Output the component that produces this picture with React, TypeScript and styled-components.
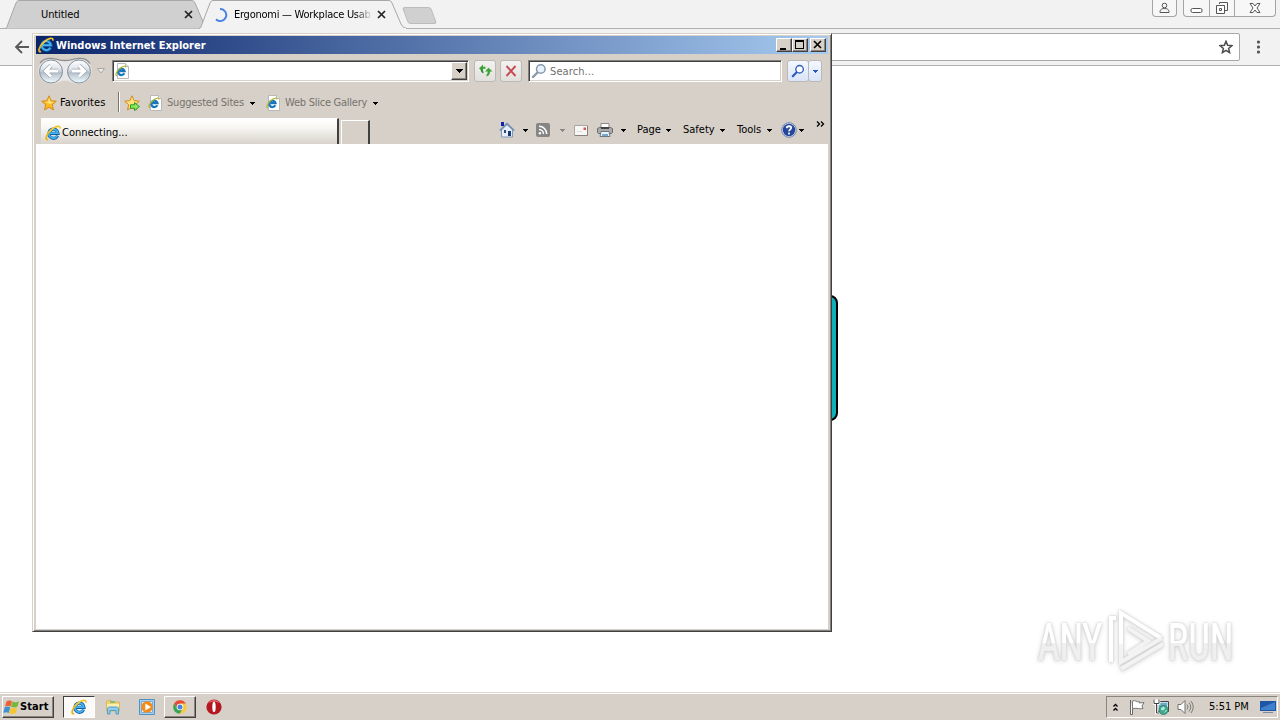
import type { ReactNode } from "react";
import styled, { createGlobalStyle, css } from "styled-components";

const GlobalStyle = createGlobalStyle`
    * { box-sizing: border-box; }
    body {
        margin: 0;
        overflow: hidden;
        background: #fff;
        color: #000;
        font-family: "DejaVu Sans Condensed", "DejaVu Sans", sans-serif;
        font-stretch: condensed;
        font-size: 11px;
    }
    svg { display: block; flex: none; }
`;

const Desktop = styled.div`
    position: relative;
    width: 1280px;
    height: 720px;
    display: flex;
    flex-direction: column;
`;

const Label = styled.span<{ $w?: number; $ls?: number; $color?: string; $bold?: boolean }>`
    flex: none;
    width: ${(props) => (props.$w ? `${props.$w}px` : "auto")};
    letter-spacing: ${(props) => props.$ls ?? 0}px;
    color: ${(props) => props.$color ?? "#000"};
    font-weight: ${(props) => (props.$bold ? 700 : 400)};
    line-height: 16px;
    white-space: nowrap;
`;

const Slot = styled.span<{ $l?: number; $t?: number }>`
    flex: none;
    display: flex;
    margin-left: ${(props) => props.$l ?? 0}px;
    margin-top: ${(props) => props.$t ?? 0}px;
`;

/* ---------- Chrome ---------- */

const Browser = styled.main`
    height: 692px;
    display: flex;
    flex-direction: column;
`;

const TabStrip = styled.div`
    height: 29px;
    display: flex;
    padding-left: 5px;
    background: #f2f2f2;
    box-shadow: inset 0 -1px #b0b0b0;
`;

const ChromeTab = styled.div<{ $active?: boolean; $w: number }>`
    position: relative;
    z-index: ${(props) => (props.$active ? 2 : 1)};
    width: ${(props) => props.$w}px;
    height: 29px;
    flex: none;
    display: flex;
    align-items: center;
    margin-right: -11px;
    padding-left: ${(props) => (props.$active ? 15 : 36)}px;
`;

const TabShape = styled.svg`
    position: absolute;
    left: 0;
    top: 0;
    z-index: -1;
`;

const TabTitle = styled.span<{ $w: number; $fade?: boolean; $ls?: number }>`
    width: ${(props) => props.$w}px;
    white-space: nowrap;
    line-height: 16px;
    letter-spacing: ${(props) => props.$ls ?? 0}px;
    ${(props) => props.$fade && css`mask-image: linear-gradient(90deg, #000 85%, transparent 97%);`}
`;

const NewTab = styled.div`
    width: 29px;
    height: 17px;
    margin: 7px 0 0 9px;
    background: #d0d0d0;
    border: 1px solid #bcbcbc;
    border-radius: 3px;
    transform: skewX(20deg);
`;

const Caption = styled.div`
    display: flex;
    margin-left: auto;
    padding-right: 4px;
    height: 17px;
`;

const CaptionGroup = styled.div<{ $gap?: number }>`
    display: flex;
    margin-left: ${(props) => props.$gap ?? 0}px;
    border: 1px solid #a4a4a4;
    border-top: 0;
    border-radius: 0 0 4px 4px;
    background: #f7f7f7;
`;

const CaptionButton = styled.div<{ $w: number }>`
    width: ${(props) => props.$w}px;
    display: flex;
    justify-content: center;
    & + & { border-left: 1px solid #a4a4a4; }
`;

const Toolbar = styled.div`
    height: 37px;
    display: flex;
    align-items: center;
    padding: 0 0 0 14px;
    background: #f2f2f2;
    border-bottom: 1px solid #b0b0b0;
`;

const Omnibox = styled.div`
    width: 1140px;
    height: 28px;
    margin-left: 70px;
    display: flex;
    align-items: center;
    justify-content: flex-end;
    padding-right: 6px;
    background: #fff;
    border: 1px solid #a8a8a8;
    border-radius: 2px;
`;

const Page = styled.div`
    flex: 1;
    background: #fff;
`;

const PagePanel = styled.div`
    width: 396px;
    height: 126px;
    margin: 229px auto 0;
    background: #0fb0b8;
    border: 2px solid #000;
    border-radius: 8px;
`;

/* ---------- Internet Explorer ---------- */

const Window = styled.section`
    position: absolute;
    z-index: 5;
    left: 32px;
    top: 33px;
    width: 800px;
    height: 599px;
    display: flex;
    flex-direction: column;
    padding: 2px 2px 1px 3px;
    background: #d6d0c8;
    border: 1px solid;
    border-color: #d6d0c8 #404040 #404040 #d6d0c8;
    box-shadow: inset 1px 1px #fff, inset -1px -1px #808080;
`;

const TitleBar = styled.header`
    height: 18px;
    flex: none;
    display: flex;
    align-items: center;
    width: 792px;
    padding: 0 2px;
    background: linear-gradient(90deg, #0a246a, #a6caf0);
`;

const raised = css`
    border: 1px solid;
    border-color: #fff #404040 #404040 #fff;
    box-shadow: inset -1px -1px #8a857d;
    background: #d6d0c8;
`;

const WinButton = styled.div<{ $gap?: number }>`
    ${raised}
    width: 16px;
    height: 14px;
    margin-left: ${(props) => props.$gap ?? 0}px;
`;

const IeRow = styled.div<{ $h: number; $pl?: number }>`
    height: ${(props) => props.$h}px;
    width: 792px;
    flex: none;
    display: flex;
    align-items: center;
    padding-left: ${(props) => props.$pl ?? 0}px;
`;

const Field = styled.div<{ $w: number; $l: number }>`
    width: ${(props) => props.$w}px;
    height: 22px;
    flex: none;
    display: flex;
    align-items: center;
    margin-left: ${(props) => props.$l}px;
    background: #fff;
    border: 1px solid;
    border-color: #808080 #fff #fff #808080;
    box-shadow: inset 1px 1px #404040, inset -1px -1px #d6d0c8;
`;

const DropButton = styled.div`
    ${raised}
    width: 16px;
    height: 18px;
    margin: 0 1px 0 auto;
    display: flex;
    align-items: center;
    justify-content: center;
`;

const SoftButton = styled.div<{ $w?: number; $l: number; $blue?: boolean }>`
    width: ${(props) => props.$w ?? 22}px;
    height: 22px;
    flex: none;
    display: flex;
    align-items: center;
    justify-content: center;
    margin-left: ${(props) => props.$l}px;
    border: 1px solid #bbb9b6;
    border-radius: 3px;
    background: ${(props) =>
        props.$blue ? "linear-gradient(#f4f8ff, #d9e4f8)" : "linear-gradient(#f3f2f0, #e2e0dd)"};
`;

const Divider = styled.div`
    width: 2px;
    height: 20px;
    flex: none;
    margin: 0 4px 3px 12px;
    background: linear-gradient(90deg, #77736d 50%, #fff 50%);
`;

const IeTab = styled.div`
    width: 298px;
    height: 26px;
    display: flex;
    align-items: center;
    padding: 2px 0 0 4px;
    background: linear-gradient(#fff, #f7f6f2 35%, #d8d3cb);
    border-right: 2px solid #404040;
    border-top: 1px solid #fff;
`;

const IeNewTab = styled.div`
    width: 29px;
    height: 24px;
    margin: 2px 0 0 2px;
    border: 1px solid #fff;
    border-right: 2px solid #404040;
    border-bottom: 0;
`;

const Commands = styled.div`
    display: flex;
    align-items: center;
    height: 24px;
    margin-left: 129px;
    margin-bottom: 2px;
`;

const IeContent = styled.div`
    width: 792px;
    height: 485px;
    background: #fff;
`;

/* ---------- Taskbar ---------- */

const Taskbar = styled.footer`
    height: 28px;
    display: flex;
    align-items: flex-start;
    padding: 3px 0 0 2px;
    background: #d6d0c8;
    border-top: 1px solid #dedad3;
    box-shadow: inset 0 1px #fff;
`;

const StartButton = styled.div`
    ${raised}
    width: 52px;
    height: 22px;
    display: flex;
    align-items: center;
`;

const TaskButton = styled.div<{ $w?: number; $l: number; $state?: "pressed" | "raised" }>`
    width: ${(props) => props.$w ?? 32}px;
    height: 22px;
    flex: none;
    display: flex;
    align-items: center;
    justify-content: center;
    margin-left: ${(props) => props.$l}px;
    ${(props) => props.$state === "raised" && raised}
    ${(props) =>
        props.$state === "pressed" &&
        css`
            background: #fbfaf9;
            border: 1px solid;
            border-color: #404040 #fff #fff #404040;
        `}
`;

const Tray = styled.div`
    width: 172px;
    height: 22px;
    margin: 0 2px 0 auto;
    display: flex;
    align-items: center;
    padding-left: 6px;
    border: 1px solid;
    border-color: #8a857d #fff #fff #8a857d;
`;

/* ---------- Watermark ---------- */

const Watermark = styled.div`
    position: absolute;
    left: 1038px;
    top: 608px;
    width: 200px;
    height: 66px;
    display: flex;
    align-items: center;
    filter: drop-shadow(0 0 1px #cdcdcd) drop-shadow(0 1px 2px #d6d6d6);
`;

const MarkSlot = styled.div<{ $w: number }>`
    width: ${(props) => props.$w}px;
    flex: none;
`;

const MarkText = styled.span`
    display: block;
    width: max-content;
    margin-top: 3px;
    font: 500 51px/66px Roboto, sans-serif;
    white-space: nowrap;
    color: transparent;
    background: linear-gradient(#fff 50%, #efefef 50%);
    background-clip: text;
    transform: scaleX(0.64);
    transform-origin: left;
`;

/* ---------- Icons ---------- */

const Arrow = ({ color = "#000" }: { color?: string }) => (
    <svg width="5" height="3" shapeRendering="crispEdges">
        <path d="M0 0h5v1H0zM1 1h3v1H1zM2 2h1v1H2z" fill={color} />
    </svg>
);

const IeMark = ({ size = 16 }: { size?: number }) => (
    <svg width={size} height={size} viewBox="0 0 16 16">
        <path d="M12.6 10.6A4.6 4.6 0 1 1 13 8.3H5" fill="none" stroke="#155fa8" strokeWidth="3.2" />
        <path d="M12.3 10.7A4.5 4.5 0 1 1 12.8 8.1H5" fill="none" stroke="#42b4ef" strokeWidth="1.8" />
        <path d="M3.2 14.6C-.6 15.6.7 9.8 6 5 10.4 1 15.6-.3 14.8 3.6" fill="none" stroke="#f4c52b" strokeWidth="1.7" />
        <path d="M2.7 14.9c-2.3-.3-1.7-4 1.3-7.3" fill="none" stroke="#b98c18" strokeWidth=".5" />
    </svg>
);

const IePage = () => (
    <svg width="16" height="16" viewBox="0 0 16 16">
        <path d="M3.5.5h8l3 3v12h-11z" fill="#fff" stroke="#b9b9b9" />
        <path d="M11.5.5v3h3" fill="#eee" stroke="#b9b9b9" />
        <path d="M10.300 10.300A3.200 3.200 0 1 1 10.600 8.200H5.500" fill="none" stroke="#1876bd" strokeWidth="2.200" />
        <path d="M3 12.700C.6 12.500 2.500 8.100 5.700 5.700 9 2.900 12.200 2.300 11.900 4.500" fill="none" stroke="#b0b52e" strokeWidth="1.200" />
    </svg>
);

const Star = ({ add }: { add?: boolean }) => (
    <svg width="16" height="16" viewBox="0 0 16 16">
        <path
            d="M8 .8l2.1 4.9 5.2.5-4 3.5 1.2 5.2L8 12.2l-4.5 2.7 1.2-5.2-4-3.5 5.2-.5z"
            fill={add ? "#ffdf77" : "#ffb91f"}
            stroke="#d48a1c"
        />
        <path d="M8 2.500l1.300 4 3.500.4-3.800 2-5-2 3-.5z" fill="#ffe37c" />
        {add && <path d="M6.5 9.8h4V7.6l4.9 4-4.9 4v-2.300h-4z" fill="#8be858" stroke="#2c9b29" />}
    </svg>
);

const NavButtons = () => (
    <svg width="56" height="28" viewBox="0 0 56 28">
        <defs>
            <linearGradient id="glass" x2="0" y2="1">
                <stop offset="0" stopColor="#fff" />
                <stop offset=".4" stopColor="#dfe4e9" />
                <stop offset=".55" stopColor="#b4bfc9" />
                <stop offset="1" stopColor="#f0fbff" />
            </linearGradient>
        </defs>
        <path d="M14 1.500c8 0 8 2 14 2s6-2 14-2A12.500 12.500 0 0 1 42 26.500c-8 0-8-3-14-3s-6 3-14 3A12.500 12.500 0 0 1 14 1.500z" fill="#e9e8e8" stroke="#e3dfda" />
        <path d="M3 6C7 1 11 1 15 1.500c6 .5 7 2 13 2s7-1.500 13-2c4-.5 9 .5 12 5" fill="none" stroke="#8f8f92" strokeWidth="1.300" />
        {[14, 42].map((cx) => (
            <circle key={cx} cx={cx} cy="14.500" r="11.500" fill="url(#glass)" stroke="#84909b" />
        ))}
        <path d="M21 14H9m5-5.500L8.500 14l5.500 5.500" fill="none" stroke="#9aa7b3" strokeWidth="4.400" />
        <path d="M21 14H9m5-5.500L8.500 14l5.500 5.500" fill="none" stroke="#fff" strokeWidth="3" />
        <path d="M35 14h12m-5-5.500l5.500 5.500-5.500 5.500" fill="none" stroke="#9aa7b3" strokeWidth="4.400" />
        <path d="M35 14h12m-5-5.500l5.500 5.500-5.500 5.500" fill="none" stroke="#fff" strokeWidth="3" />
    </svg>
);

const Magnifier = ({ color, glass = "#fff", size = 16 }: { color: string; glass?: string; size?: number }) => (
    <svg width={size} height={size} viewBox="0 0 16 16">
        <path d="M6.500 9.500L2 14" stroke={color} strokeWidth="2.400" strokeLinecap="round" />
        <circle cx="9.800" cy="6" r="4.300" fill={glass} stroke={color} strokeWidth="1.500" />
    </svg>
);

const RefreshIcon = () => (
    <svg width="16" height="16" viewBox="0 0 16 16">
        <path d="M2 5.500L6 1.500v2.200h2.500v2H6v2.800z" fill="#3aa434" />
        <path d="M4.500 6.500Q4.500 9 6.500 9.500" fill="none" stroke="#2b8a2b" strokeWidth="1.500" />
        <path d="M8 8.500L11.500 4.800 15.500 8.500H13q0 4-3.500 5v-1.800q1.300-1 1.200-3.200z" fill="#3aa434" />
    </svg>
);

const HomeIcon = () => (
    <svg width="16" height="16" viewBox="0 0 16 16">
        <path d="M2.500 8v7h11V8L8 2.500z" fill="#e5edf6" stroke="#8298b6" />
        <path d="M.8 8.500L8 1.500l7.200 7" fill="none" stroke="#6d8cb2" strokeWidth="1.500" />
        <path d="M2 0h3v4H2z" fill="#1520a8" />
        <path d="M9 9h3v5H9z" fill="#153a76" />
        <path d="M5 8h2v3H5z" fill="#2b4c80" />
    </svg>
);

const FeedIcon = () => (
    <svg width="14" height="14" viewBox="0 0 14 14">
        <rect width="14" height="14" rx="2" fill="#858585" />
        <path d="M3 3.300A7.700 7.700 0 0 1 10.700 11M3 6.500A4.500 4.500 0 0 1 7.500 11" fill="none" stroke="#fff" strokeWidth="1.500" />
        <circle cx="3.900" cy="10.200" r="1.200" fill="#fff" />
    </svg>
);

const MailIcon = () => (
    <svg width="14" height="11" viewBox="0 0 14 11">
        <path d="M.5.5h13v10H.5z" fill="#f8f7f5" stroke="#aaa7a2" />
        <path d="M1 10.500h12.500V1" fill="none" stroke="#85827e" />
        <path d="M9.500 2.500H12V5H9.500z" fill="#d8544f" />
        <path d="M3 6.500h5" stroke="#ddd" />
    </svg>
);

const PrinterIcon = () => (
    <svg width="16" height="16" viewBox="0 0 16 16">
        <path d="M4 1.500h8V7H4z" fill="#fff" stroke="#8b8b8b" />
        <path d="M.5 6.500l2-1h11l2 1v4l-1 1h-13l-1-1z" fill="#aaa" stroke="#6b6b6b" />
        <path d="M4 5h8v2H4z" fill="#444" />
        <path d="M4 9.500h8l1 5H3z" fill="#e9f3fb" stroke="#6a7883" />
        <path d="M5 12h6v2H5z" fill="#77a8cb" />
    </svg>
);

const HelpIcon = () => (
    <svg width="16" height="16" viewBox="0 0 16 16">
        <circle cx="8" cy="8" r="7.300" fill="#dfe6f3" stroke="#7283aa" />
        <circle cx="8" cy="8" r="6.200" fill="#24479c" />
        <path d="M4 5a5 4 0 0 1 8 0q-4 2-8 0z" fill="#6f92d6" />
        <path d="M5.800 6.200c0-3 4.600-2.800 4.400-.2C10.100 7.500 8 7.500 8 9.300M8 10.500v2" fill="none" stroke="#fff" strokeWidth="1.700" />
    </svg>
);

const FlagIcon = () => (
    <svg width="16" height="16" viewBox="0 0 16 16">
        <path d="M1.500 1v14.500h2V10" fill="#fff" stroke="#666" />
        <path d="M3.500 2c3-1.500 4 1.500 7 .8V4l4.500-.5-2 3.500 1 2.500c-4 1-5-1-10.500.2z" fill="#fff" stroke="#777" />
    </svg>
);

const NetworkIcon = () => (
    <svg width="16" height="16" viewBox="0 0 16 16">
        <path d="M4.500 2.500h11v10h-11z" fill="#c4dce8" stroke="#444" />
        <path d="M6 4h8v7H6z" fill="#6ba9c5" />
        <path d="M1 .5v4h5v-4M3.500 4.500V14H6M3.500.5v3" fill="none" stroke="#fff" strokeWidth="2.500" />
        <path d="M1 .5v4h5v-4M3.500 4.500V14H6" fill="none" stroke="#444" />
        <circle cx="10.500" cy="11" r="4.500" fill="#42aa91" stroke="#247b69" strokeWidth=".8" />
        <path d="M8 9l3-1.500 1 2-2 2-2-1zM11 14l2-3 1.500.5" fill="#b6ead2" />
    </svg>
);

const SpeakerIcon = () => (
    <svg width="17" height="16" viewBox="0 0 17 16">
        <path d="M1 5.500h3l4-4v13l-4-4H1z" fill="#fff" stroke="#707070" />
        <path d="M10 5.500q2 2.500 0 5M12 3.500q3.500 4.500 0 9M14 2q4.500 6 0 12" fill="none" stroke="#7c7c7c" />
    </svg>
);

const WindowsFlag = () => (
    <svg width="17" height="16" viewBox="0 0 17 16">
        <path d="M3.500 2.500C6 .8 7.500 1.500 9 2.300L7.500 7.500C5.500 6.500 4 6.500 2 7.600z" fill="#ee6031" />
        <path d="M9.500 2.600c2 1 4 1 6.500-.3L14.500 7.600c-2.400 1.200-4 1.200-6.500 0z" fill="#76b83e" />
        <path d="M1.700 8.300c2.300-1.200 3.700-1 5.500 0L5.700 14C4 13 2.500 13 .3 14z" fill="#3d91d4" />
        <path d="M7.700 8.500c2 1 4.200 1.300 6.500.1L12.700 14c-2.500 1.400-4 1.300-6.500.2z" fill="#f7c52d" />
    </svg>
);

const ExplorerIcon = () => (
    <svg width="16" height="16" viewBox="0 0 16 16">
        <path d="M1.500 3l1-1.500h4L8 3h6.500v9h-13z" fill="#f0d36f" stroke="#d3b865" />
        <path d="M2 5h12v4H2z" fill="#fbeeb0" />
        <path d="M5 3h5" stroke="#65b87d" strokeWidth="1.500" />
        <path d="M2.500 15V9.500c0-1 1-1.500 2-1.500h7c1 0 2 .5 2 1.500V15H11v-3.500H5V15z" fill="#8ccdee" stroke="#549dc4" />
    </svg>
);

const PlayerIcon = () => (
    <svg width="16" height="16" viewBox="0 0 16 16">
        <path d="M.5.5h15v15H.5z" fill="#a9d1ef" stroke="#4f91c5" />
        <path d="M2.500 2.500h11v11h-11z" fill="#e3effa" stroke="#72addb" />
        <circle cx="8" cy="8" r="5.800" fill="#f38b1b" />
        <path d="M6.300 4.500v7L12 8z" fill="#fff" />
    </svg>
);

const ChromeIcon = () => (
    <svg width="14" height="14" viewBox="0 0 14 14">
        <circle cx="7" cy="7" r="6.800" fill="#f9ca3e" />
        <path d="M1.100 3.600A6.800 6.800 0 0 1 12.900 3.600H7L4.200 8.500z" fill="#e34b3e" />
        <path d="M1.100 3.600A6.800 6.800 0 0 0 6.600 13.800L9.800 8.500 4.200 8.600z" fill="#38a55b" />
        <circle cx="7" cy="7" r="3.300" fill="#fff" />
        <circle cx="7" cy="7" r="2.500" fill="#4485dc" />
    </svg>
);

const OperaIcon = () => (
    <svg width="16" height="16" viewBox="0 0 16 16">
        <circle cx="8" cy="8" r="7.600" fill="#b51620" />
        <path d="M2 4.500a7 7 0 0 1 12 0C11 2 5 2 2 4.500z" fill="#e5666a" />
        <ellipse cx="8" cy="8" rx="1.700" ry="5.200" fill="#fff" />
    </svg>
);

const ChromeClose = () => (
    <svg width="9" height="9">
        <path d="M1 1l7 7M8 1L1 8" stroke="#222" strokeWidth="1.700" />
    </svg>
);

function Tab({ active, width, children }: { active?: boolean; width: number; children: ReactNode }) {
    return (
        <ChromeTab $active={active} $w={width}>
            <TabShape width={width} height="29">
                <path
                    d={`M0 28.500C2 28 2 27 3 24L11 3Q12 .5 14 .5H${width - 18}q2 0 3 2.500l9 21q2 4.500 6 4.500`}
                    fill={active ? "#f2f2f2" : "#d0d0d0"}
                    stroke="#a7a7a7"
                />
                {active && <path d={`M1 28h${width - 2}v1H1z`} fill="#f2f2f2" />}
            </TabShape>
            {children}
        </ChromeTab>
    );
}

function ChromeWindow() {
    return (
        <Browser>
            <TabStrip>
                <Tab width={205}>
                    <TabTitle $w={143} $ls={-0.1}>Untitled</TabTitle>
                    <ChromeClose />
                </Tab>
                <Tab active width={208}>
                    <svg width="14" height="14">
                        <path d="M6 1a6 6 0 1 1-4 10.200" fill="none" stroke="#4a83e6" strokeWidth="2" />
                    </svg>
                    <Slot $l={6}>
                        <TabTitle $w={143} $ls={-0.25} $fade>Ergonomi — Workplace Usab</TabTitle>
                    </Slot>
                    <ChromeClose />
                </Tab>
                <NewTab />
                <Caption>
                    <CaptionGroup>
                        <CaptionButton $w={23}>
                            <svg width="11" height="14">
                                <circle cx="5.500" cy="5.500" r="2.300" fill="none" stroke="#555" />
                                <path d="M1 12.500v-1c0-2 2-3 4.500-3s4.500 1 4.500 3v1z" fill="none" stroke="#555" />
                            </svg>
                        </CaptionButton>
                    </CaptionGroup>
                    <CaptionGroup $gap={6}>
                        <CaptionButton $w={25}>
                            <svg width="13" height="14">
                                <rect x="1" y="8.500" width="11" height="4" rx="1.500" fill="#fff" stroke="#555" />
                            </svg>
                        </CaptionButton>
                        <CaptionButton $w={25}>
                            <svg width="15" height="15">
                                <path d="M4.500 4V2.500h8v8H10" fill="none" stroke="#555" />
                                <path d="M1.500 5.500h8v8h-8zM4.500 8.500h2v2h-2z" fill="#fff" stroke="#555" />
                            </svg>
                        </CaptionButton>
                        <CaptionButton $w={41}>
                            <svg width="12" height="13">
                                <path d="M1 3.500h3l2 2.500 2-2.500h3L8 8l3 4.500H8L6 10l-2 2.500H1L4 8z" fill="#fff" stroke="#555" />
                            </svg>
                        </CaptionButton>
                    </CaptionGroup>
                </Caption>
            </TabStrip>
            <Toolbar>
                <svg width="16" height="14">
                    <path d="M15 7H2m6-6L2 7l6 6" fill="none" stroke="#5a5a5a" strokeWidth="1.800" />
                </svg>
                <Omnibox>
                    <svg width="14" height="14" viewBox="0 0 14 14">
                        <path d="M7 1.300l1.600 4 4.300.3-3.300 2.800 1 4.200L7 10.300l-3.600 2.300 1-4.200L1.100 5.600l4.300-.3z" fill="none" stroke="#4c4c4c" strokeWidth="1.500" />
                    </svg>
                </Omnibox>
                <Slot $l={17}>
                    <svg width="4" height="14" fill="#555">
                        <circle cx="1.500" cy="2" r="1.600" />
                        <circle cx="1.500" cy="7" r="1.600" />
                        <circle cx="1.500" cy="12" r="1.600" />
                    </svg>
                </Slot>
            </Toolbar>
            <Page>
                <PagePanel />
            </Page>
        </Browser>
    );
}

function IeWindow() {
    return (
        <Window>
            <TitleBar>
                <IeMark />
                <Slot $l={2} $t={1}>
                    <Label $w={720} $color="#fff" $bold>Windows Internet Explorer</Label>
                </Slot>
                <WinButton>
                    <svg width="14" height="12"><path d="M3 9h6v2H3z" fill="#000" /></svg>
                </WinButton>
                <WinButton>
                    <svg width="14" height="12"><path d="M2 1h9v9H2zM3 3v6h7V3z" fillRule="evenodd" fill="#000" /></svg>
                </WinButton>
                <WinButton $gap={2}>
                    <svg width="14" height="12"><path d="M3 2l7 7M10 2L3 9" stroke="#000" strokeWidth="1.600" /></svg>
                </WinButton>
            </TitleBar>
            <IeRow $h={34} $pl={1}>
                <NavButtons />
                <Slot $l={4}>
                    <svg width="8" height="6"><path d="M.5.500h7L4 5z" fill="#eee" stroke="#aaa7a2" /></svg>
                </Slot>
                <Field $w={357} $l={7}>
                    <Slot $l={1}><IePage /></Slot>
                    <DropButton>
                        <svg width="7" height="4" shapeRendering="crispEdges"><path d="M0 0h7v1H0zM1 1h5v1H1zM2 2h3v1H2zM3 3h1v1H3z" /></svg>
                    </DropButton>
                </Field>
                <SoftButton $l={5}>
                    <RefreshIcon />
                </SoftButton>
                <SoftButton $l={4}>
                    <svg width="12" height="12"><path d="M1.500 1l9 10M10.500 1l-9 10" stroke="#c64a50" strokeWidth="1.900" /></svg>
                </SoftButton>
                <Field $w={254} $l={6}>
                    <Slot $l={2}><Magnifier color="#8798aa" glass="#e6f3fc" /></Slot>
                    <Slot $l={3} $t={2}><Label $color="#6f6f6f" $ls={0.1}>Search...</Label></Slot>
                </Field>
                <SoftButton $l={5} $w={22} $blue><Magnifier color="#2859bd" size={14} /></SoftButton>
                <SoftButton $l={-1} $w={14} $blue><Arrow color="#2859bd" /></SoftButton>
            </IeRow>
            <IeRow $h={30} $pl={5}>
                <Star />
                <Slot $l={3}><Label $w={46} $ls={0.1}>Favorites</Label></Slot>
                <Divider />
                <Star add />
                <Slot $l={7}><IePage /></Slot>
                <Slot $l={4}><Label $w={79} $ls={-0.2} $color="#77736d">Suggested Sites</Label></Slot>
                <Slot $l={4}><Arrow /></Slot>
                <Slot $l={10}><IePage /></Slot>
                <Slot $l={4}><Label $w={84} $ls={-0.25} $color="#77736d">Web Slice Gallery</Label></Slot>
                <Slot $l={4}><Arrow /></Slot>
            </IeRow>
            <IeRow $h={26} $pl={5}>
                <IeTab>
                    <IeMark />
                    <Slot $l={1}><Label>Connecting...</Label></Slot>
                </IeTab>
                <IeNewTab />
                <Commands>
                    <HomeIcon />
                    <Slot $l={8}><Arrow /></Slot>
                    <Slot $l={8}><FeedIcon /></Slot>
                    <Slot $l={10}><Arrow color="#8b8781" /></Slot>
                    <Slot $l={9}><MailIcon /></Slot>
                    <Slot $l={9}><PrinterIcon /></Slot>
                    <Slot $l={8}><Arrow /></Slot>
                    <Slot $l={11}><Label $w={25}>Page</Label></Slot>
                    <Slot $l={4}><Arrow /></Slot>
                    <Slot $l={12}><Label $w={33}>Safety</Label></Slot>
                    <Slot $l={4}><Arrow /></Slot>
                    <Slot $l={12}><Label $w={26}>Tools</Label></Slot>
                    <Slot $l={4}><Arrow /></Slot>
                    <Slot $l={9}><HelpIcon /></Slot>
                    <Slot $l={2}><Arrow /></Slot>
                    <Slot $l={12} $t={-12}>
                        <svg width="9" height="6"><path d="M1 .500L3.500 3 1 5.500M5 .500L7.500 3 5 5.500" fill="none" stroke="#000" strokeWidth="1.300" /></svg>
                    </Slot>
                </Commands>
            </IeRow>
            <IeContent />
        </Window>
    );
}

function App() {
    return (
        <Desktop>
            <GlobalStyle />
            <ChromeWindow />
            <IeWindow />
            <Watermark>
                <MarkSlot $w={68}><MarkText>ANY</MarkText></MarkSlot>
                <svg width="62" height="66" viewBox="0 0 62 66" fill="none" stroke="#fff" strokeWidth="4">
                    <path d="M15 38V5l40 25M5 54V10h5" />
                    <path d="M15 36v18l41-24M22 46l20-13-20-13" stroke="#f3f3f3" />
                    <path d="M15 61l42-25" stroke="#f3f3f3" />
                </svg>
                <MarkSlot $w={66}><MarkText>RUN</MarkText></MarkSlot>
            </Watermark>
            <Taskbar>
                <StartButton>
                    <WindowsFlag />
                    <Label $bold $ls={0.1}>Start</Label>
                </StartButton>
                <TaskButton $l={9} $state="pressed"><IeMark /></TaskButton>
                <TaskButton $l={2}><ExplorerIcon /></TaskButton>
                <TaskButton $l={2}><PlayerIcon /></TaskButton>
                <TaskButton $l={1} $state="raised"><ChromeIcon /></TaskButton>
                <TaskButton $l={2}><OperaIcon /></TaskButton>
                <Tray>
                    <svg width="5" height="9"><path d="M.500 3.500l2-2 2 2M.500 7.500l2-2 2 2" fill="none" stroke="#000" strokeWidth="1.300" /></svg>
                    <Slot $l={11}><FlagIcon /></Slot>
                    <Slot $l={8}><NetworkIcon /></Slot>
                    <Slot $l={8}><SpeakerIcon /></Slot>
                    <Slot $l={15}><Label $w={42}>5:51 PM</Label></Slot>
                    <Slot $l={9}>
                        <svg width="16" height="14">
                            <path d="M0 1h16v10H0z" fill="#1e56a7" />
                            <path d="M1 8L15 2v8H1z" fill="#3e80cb" />
                            <path d="M3 12h10v1H3z" fill="#788ba0" />
                        </svg>
                    </Slot>
                </Tray>
            </Taskbar>
        </Desktop>
    );
}

export default App;
